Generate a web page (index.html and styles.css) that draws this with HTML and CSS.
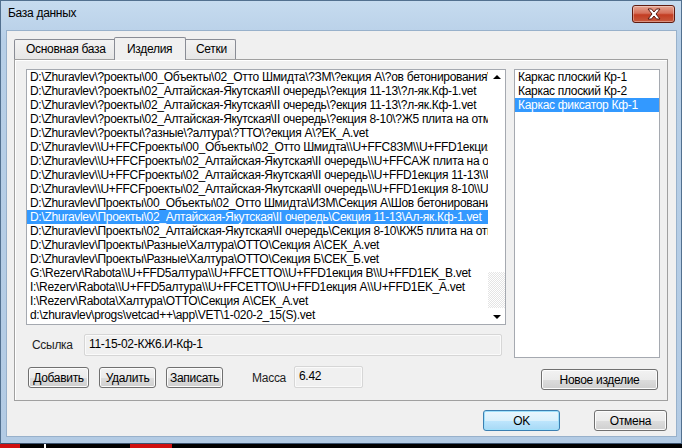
FILE: index.html
```html
<!DOCTYPE html>
<html lang="ru">
<head>
  <meta charset="UTF-8">
  <title>База данных</title>
  <link rel="stylesheet" href="styles.css">
</head>
<body>

  <div class="window">
    <div class="titlebar">
      <span class="title">База данных</span>
      <button class="close-btn" aria-label="Закрыть">
        <svg width="16" height="12" viewBox="0 0 16 12">
          <path d="M2 1 H5.5 L8 4 L10.5 1 H14 L10 6 L14 11 H10.5 L8 8 L5.5 11 H2 L6 6 Z" fill="#fff" stroke="#5a1a10" stroke-width="1" stroke-linejoin="round"/>
        </svg>
      </button>
    </div>

    <div class="client">
      <div class="tabs">
        <div class="tab">Основная база</div>
        <div class="tab active">Изделия</div>
        <div class="tab">Сетки</div>
      </div>

      <div class="panel">
        <div class="left-col">
          <div class="listbox files">
            <ul class="rows">
              <li>D:\Zhuravlev\?роекты\00_Объекты\02_Отто Шмидта\?ЗМ\?екция А\?ов бетонирования\</li>
              <li>D:\Zhuravlev\?роекты\02_Алтайская-Якутская\II очередь\?екция 11-13\?л-як.Кф-1.vet</li>
              <li>D:\Zhuravlev\?роекты\02_Алтайская-Якутская\II очередь\?екция 11-13\?л-як.Кф-1.vet</li>
              <li>D:\Zhuravlev\?роекты\02_Алтайская-Якутская\II очередь\?екция 8-10\?Ж5 плита на отм</li>
              <li>D:\Zhuravlev\?роекты\?азные\?алтура\?ТТО\?екция А\?ЕК_А.vet</li>
              <li>D:\Zhuravlev\\U+FFCFроекты\00_Объекты\02_Отто Шмидта\\U+FFC8ЗМ\\U+FFD1екция</li>
              <li>D:\Zhuravlev\\U+FFCFроекты\02_Алтайская-Якутская\II очередь\\U+FFCAЖ плита на отм</li>
              <li>D:\Zhuravlev\\U+FFCFроекты\02_Алтайская-Якутская\II очередь\\U+FFD1екция 11-13\\U+FFC0</li>
              <li>D:\Zhuravlev\\U+FFCFроекты\02_Алтайская-Якутская\II очередь\\U+FFD1екция 8-10\\U+FFCA</li>
              <li>D:\Zhuravlev\Проекты\00_Объекты\02_Отто Шмидта\ИЗМ\Секция А\Шов бетонирования</li>
              <li class="selected">D:\Zhuravlev\Проекты\02_Алтайская-Якутская\II очередь\Секция 11-13\Ал-як.Кф-1.vet</li>
              <li>D:\Zhuravlev\Проекты\02_Алтайская-Якутская\II очередь\Секция 8-10\КЖ5 плита на отм</li>
              <li>D:\Zhuravlev\Проекты\Разные\Халтура\ОТТО\Секция А\СЕК_А.vet</li>
              <li>D:\Zhuravlev\Проекты\Разные\Халтура\ОТТО\Секция Б\СЕК_Б.vet</li>
              <li>G:\Rezerv\Rabota\\U+FFD5алтура\\U+FFCETTO\\U+FFD1екция B\\U+FFD1EK_B.vet</li>
              <li>I:\Rezerv\Rabota\\U+FFD5алтура\\U+FFCETTO\\U+FFD1екция A\\U+FFD1EK_A.vet</li>
              <li>I:\Rezerv\Rabota\Халтура\ОТТО\Секция А\СЕК_А.vet</li>
              <li>d:\zhuravlev\progs\vetcad++\app\VET\1-020-2_15(S).vet</li>
            </ul>
            <div class="scrollbar">
              <div class="arrow up"></div>
              <div class="thumb"></div>
              <div class="track"></div>
              <div class="arrow down"></div>
            </div>
          </div>

          <div class="field-row">
            <label class="field-label">Ссылка</label>
            <div class="field link-field">11-15-02-КЖ6.И-Кф-1</div>
          </div>

          <div class="btn-row">
            <button class="btn btn-add">Добавить</button>
            <button class="btn btn-del">Удалить</button>
            <button class="btn btn-save">Записать</button>
            <label class="field-label mass-label">Масса</label>
            <div class="field mass-field">6.42</div>
          </div>
        </div>

        <div class="right-col">
          <div class="listbox items">
            <ul class="rows">
              <li>Каркас плоский Кр-1</li>
              <li>Каркас плоский Кр-2</li>
              <li class="selected">Каркас фиксатор Кф-1</li>
            </ul>
          </div>
          <button class="btn new-btn">Новое изделие</button>
        </div>
      </div>

      <div class="dialog-buttons">
        <button class="btn btn-ok">OK</button>
        <button class="btn btn-cancel">Отмена</button>
      </div>
    </div>
  </div>

  <div class="taskbar">
    <span class="tb-red tb-a"></span>
    <span class="tb-white"></span>
    <span class="tb-red tb-b"></span>
  </div>

</body>
</html>
```

FILE: styles.css
```css
body {
  margin: 0;
  width: 682px;
  height: 448px;
  overflow: hidden;
  background: #000;
  font-family: "Liberation Sans", Arial, sans-serif;
  font-size: 12px;
  letter-spacing: -0.3px;
  color: #000;
}

ul {
  list-style: none;
  margin: 0;
  padding: 0;
}

/* window frame */
.window {
  box-sizing: border-box;
  height: 444px;
  border: 1px solid #52708f;
  border-bottom-color: #3c5470;
  background: linear-gradient(#c6dbef, #b7cfe7 40px, #b3cbe4);
  padding: 0 4px 6px 5px;
  display: flex;
  flex-direction: column;
}

.titlebar {
  height: 29px;
  display: flex;
  align-items: center;
  justify-content: space-between;
  flex-shrink: 0;
}

.title {
  padding-left: 2px;
  font-size: 12px;
  margin-top: -5px;
}

.close-btn {
  width: 43px;
  height: 18px;
  margin-top: -4px;
  margin-right: 2px;
  padding: 0;
  border: 1px solid #5f1b10;
  border-radius: 3px;
  background: linear-gradient(#e5a491, #d6705a 45%, #c33d22 55%, #c85a3e);
  box-shadow: inset 0 0 0 1px rgba(255, 255, 255, 0.35);
  display: flex;
  align-items: center;
  justify-content: center;
}

.client {
  flex: 1;
  background: #f0f0f0;
  border: 1px solid #98b1cb;
  display: flex;
  flex-direction: column;
}

/* tabs */
.tabs {
  display: flex;
  margin: 8px 0 0 7px;
  height: 20px;
  position: relative;
  z-index: 1;
}

.tab {
  box-sizing: border-box;
  height: 20px;
  padding: 0 11px;
  line-height: 19px;
  white-space: nowrap;
  border: 1px solid #898c95;
  border-bottom: none;
  border-radius: 2px 2px 0 0;
  background: linear-gradient(#f3f3f3, #e6e6e6);
  margin-right: -1px;
}

.tab:first-child {
  width: 102px;
}

.tab.active {
  width: 72px;
  height: 23px;
  margin-top: -2px;
  padding: 0 12px;
  line-height: 23px;
  background: #f0f0f0;
  z-index: 2;
  margin-left: -1px;
  margin-right: -2px;
}

.tab:last-child {
  width: 52px;
}

.panel {
  box-sizing: border-box;
  width: 654px;
  height: 342px;
  margin-left: 7px;
  border: 1px solid #a0a0a0;
  box-shadow: inset 1px 1px #fff;
  padding: 9px 7px 0 11px;
  display: flex;
  gap: 8px;
}

.left-col {
  width: 480px;
  display: flex;
  flex-direction: column;
}

.right-col {
  width: 146px;
  display: flex;
  flex-direction: column;
}

/* list boxes */
.listbox {
  box-sizing: border-box;
  border: 1px solid #a5a9b0;
  background: #fff;
  overflow: hidden;
}

.listbox.files {
  height: 256px;
  display: flex;
}

.listbox.items {
  height: 289px;
}

.rows {
  flex: 1;
  min-width: 0;
}

.rows li {
  height: 14px;
  line-height: 14px;
  padding-left: 3px;
  white-space: nowrap;
  overflow: hidden;
}

.rows li.selected {
  background: #3399ff;
  color: #fff;
}

.scrollbar {
  width: 17px;
  display: flex;
  flex-direction: column;
}

.scrollbar .arrow {
  height: 16px;
  position: relative;
}

.scrollbar .arrow::after {
  content: "";
  position: absolute;
  left: 5px;
  border-left: 4px solid transparent;
  border-right: 4px solid transparent;
}

.scrollbar .up::after {
  top: 5px;
  border-bottom: 4px solid #000;
}

.scrollbar .down::after {
  top: 7px;
  border-top: 4px solid #000;
}

.scrollbar .thumb {
  flex: 1;
}

.scrollbar .track {
  height: 36px;
  background: repeating-conic-gradient(#e4e4e4 0 25%, #fff 0 50%) 0 0 / 2px 2px;
}

/* fields */
.field-row {
  display: flex;
  align-items: center;
  margin-top: 9px;
  height: 22px;
}

.field-label {
  color: #1e1e1e;
}

.field-row .field-label {
  width: 52px;
  padding-left: 6px;
}

.field {
  box-sizing: border-box;
  height: 22px;
  border: 1px solid #d6d6d6;
  border-radius: 2px;
  box-shadow: inset 0 0 0 1px #fafafa;
  padding: 1px 4px 0;
  line-height: 16px;
}

.link-field {
  width: 418px;
}

.btn-row {
  display: flex;
  align-items: center;
  margin-top: 11px;
  padding-left: 2px;
}

.btn {
  box-sizing: border-box;
  height: 21px;
  padding: 0;
  border: 1px solid #707070;
  border-radius: 3px;
  background: linear-gradient(#f2f2f2, #ebebeb 50%, #dddddd 51%, #cfcfcf);
  box-shadow: inset 0 0 0 1px #fcfcfc;
  font-family: inherit;
  font-size: 12px;
  letter-spacing: inherit;
  color: #000;
}

.btn-add {
  width: 61px;
}

.btn-del {
  width: 57px;
  margin-left: 10px;
}

.btn-save {
  width: 57px;
  margin-left: 10px;
}

.mass-label {
  margin-left: 29px;
  margin-right: 8px;
}

.mass-field {
  width: 69px;
  margin-top: -2px;
}

.new-btn {
  width: 117px;
  margin-top: 11px;
  align-self: flex-end;
  margin-right: 2px;
}

/* OK / Cancel */
.dialog-buttons {
  display: flex;
  justify-content: flex-end;
  gap: 34px;
  margin-top: 9px;
  padding-right: 9px;
}

.btn-ok {
  width: 77px;
  border-color: #3c7fb1;
  background: linear-gradient(#eaf6fd, #d9f0fc 50%, #bee6fd 51%, #a7d9f5);
  box-shadow: inset 0 0 0 1px #9fe0fb;
}

.btn-cancel {
  width: 73px;
}

/* strip under the window */
.taskbar {
  height: 4px;
  display: flex;
}

.tb-red {
  background: #d01010;
}

.tb-a {
  width: 20px;
}

.tb-white {
  width: 2px;
  margin-left: 24px;
  background: #fff;
}

.tb-b {
  width: 42px;
  margin-left: 84px;
}
```
